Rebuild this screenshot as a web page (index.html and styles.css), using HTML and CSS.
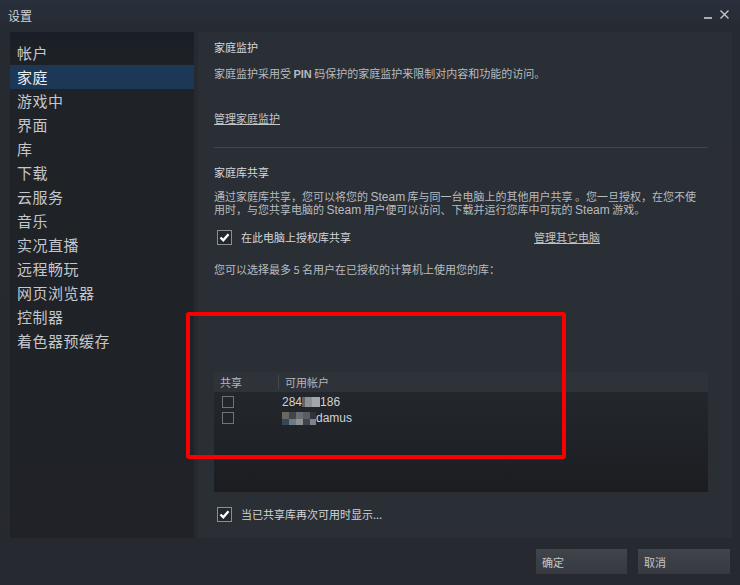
FILE: index.html
```html
<!DOCTYPE html>
<html lang="zh-CN">
<head>
    <meta charset="UTF-8">
    <meta name="viewport" content="width=device-width, initial-scale=1.0">
    <title>设置</title>
    <link rel="stylesheet" href="styles.css">
</head>
<body>
    <div class="window">
        <div class="titlebar">
            <span class="title">设置</span>
            <div class="controls">
                <span class="minimize"></span>
                <svg class="close" width="9" height="9" viewBox="0 0 9 9">
                    <path d="M0.5 0.5 L8.5 8.5 M8.5 0.5 L0.5 8.5" stroke="#c4c7cb" stroke-width="1.4"/>
                </svg>
            </div>
        </div>

        <div class="main">
            <ul class="sidebar">
                <li>帐户</li>
                <li class="active">家庭</li>
                <li>游戏中</li>
                <li>界面</li>
                <li>库</li>
                <li>下载</li>
                <li>云服务</li>
                <li>音乐</li>
                <li>实况直播</li>
                <li>远程畅玩</li>
                <li>网页浏览器</li>
                <li>控制器</li>
                <li>着色器预缓存</li>
            </ul>

            <div class="content">
                <div class="section-title">家庭监护</div>
                <p class="desc">家庭监护采用受 <b>PIN</b> 码保护的家庭监护来限制对内容和功能的访问。</p>
                <a class="link manage-link" href="#">管理家庭监护</a>
                <div class="divider"></div>

                <div class="section-title">家庭库共享</div>
                <p class="desc para">通过家庭库共享，您可以将您的 <span class="latin">Steam</span> 库与同一台电脑上的其他用户共享 。您一旦授权，在您不使<br>用时，与您共享电脑的 <span class="latin">Steam</span> 用户便可以访问、下载并运行您库中可玩的 <span class="latin">Steam</span> 游戏。</p>

                <div class="check-row">
                    <label class="check">
                        <span class="box checked">
                            <svg width="13" height="13" viewBox="0 0 13 13"><path d="M2.5 6.5 L5.3 9.3 L10.5 3.2" stroke="#fff" stroke-width="2.4" fill="none"/></svg>
                        </span>
                        <span class="label">在此电脑上授权库共享</span>
                    </label>
                    <a class="link other-link" href="#">管理其它电脑</a>
                </div>

                <p class="desc limit">您可以选择最多 5 名用户在已授权的计算机上使用您的库：</p>

                <div class="table">
                    <div class="thead">
                        <span class="col-share">共享</span>
                        <span class="col-user">可用帐户</span>
                    </div>
                    <div class="tbody">
                        <div class="row">
                            <span class="box small"></span>
                            <span class="user">284<span class="mosaic m1"><i></i><i></i><i></i></span>186</span>
                        </div>
                        <div class="row">
                            <span class="box small"></span>
                            <span class="user"><span class="mosaic m2"><i></i><i></i><i></i><i></i><i></i></span>damus</span>
                        </div>
                    </div>
                </div>

                <label class="check bottom-check">
                    <span class="box checked">
                        <svg width="13" height="13" viewBox="0 0 13 13"><path d="M2.5 6.5 L5.3 9.3 L10.5 3.2" stroke="#fff" stroke-width="2.4" fill="none"/></svg>
                    </span>
                    <span class="label">当已共享库再次可用时显示...</span>
                </label>

                <div class="highlight"></div>
            </div>
        </div>

        <div class="footer">
            <button class="btn ok">确定</button>
            <button class="btn cancel">取消</button>
        </div>
    </div>
</body>
</html>
```

FILE: styles.css
```css
body {
    margin: 0;
    padding: 0;
    background: #262a30;
    font-family: "Noto Sans CJK SC", "Liberation Sans", sans-serif;
    color: #b9bcc0;
}
.window {
    width: 740px;
    height: 585px;
    background: linear-gradient(to bottom, #29303c 0px, #262a31 30px, #262a30 100%);
    display: flex;
    flex-direction: column;
}

/* title bar */
.titlebar {
    height: 32px;
    display: flex;
    align-items: center;
    justify-content: space-between;
    padding: 0 11px 0 8px;
    box-sizing: border-box;
}
.title {
    font-size: 12px;
    color: #d0d3d7;
    margin-top: -1px;
}
.controls {
    display: flex;
    align-items: flex-end;
    gap: 8px;
    margin-top: -3px;
}
.minimize {
    width: 8px;
    height: 2px;
    background: #a9acb1;
}

/* main area: side menu + page */
.main {
    display: flex;
    gap: 4px;
    padding: 0 8px 0 10px;
    height: 506px;
}
.sidebar {
    list-style: none;
    margin: 0;
    padding: 9px 0 0 0;
    width: 184px;
    background: linear-gradient(to bottom, #1a1e26 0px, #1f2227 40px, #202227 100%);
}
.sidebar li {
    font-size: 15px;
    line-height: 24px;
    height: 24px;
    padding-left: 7px;
    color: #c4c7cb;
    letter-spacing: 0.5px;
}
.sidebar li.active {
    background: #1d3857;
    color: #eef0f2;
}

.content {
    flex: 1;
    position: relative;
    background: #2a2e35;
    padding: 7px 24px 0 16px;
    font-size: 11px;
}
.section-title {
    line-height: 16px;
    color: #d6d8db;
}
.desc {
    margin: 10px 0 0 0;
    line-height: 16px;
    color: #b8bbbf;
}
.desc b {
    font-family: "Liberation Sans", sans-serif;
    font-weight: bold;
    line-height: 10px;
}
.latin {
    font-family: "Liberation Sans", sans-serif;
    font-size: 12px;
    line-height: 10px;
}
.link {
    display: inline-block;
    color: #c3c6ca;
    text-decoration: underline;
    line-height: 16px;
}
.manage-link {
    margin-top: 29px;
}
.divider {
    height: 1px;
    background: #41454c;
    margin: 21px 0 16px 0;
}
.para {
    line-height: 13px;
    height: 24px;
    margin-top: 10px;
}

/* checkbox rows */
.check-row {
    display: flex;
    align-items: center;
    margin-top: 15px;
    padding-left: 3px;
    height: 16px;
}
.check {
    display: flex;
    align-items: center;
    gap: 9px;
    width: 317px;
}
.check .label {
    color: #d3d5d8;
    font-size: 11px;
}
.box {
    width: 13px;
    height: 13px;
    border: 1px solid #8b8e93;
    background: #24272c;
    display: flex;
    align-items: center;
    justify-content: center;
}
.box.small {
    width: 10px;
    height: 10px;
    border-color: #6f7378;
    background: transparent;
}
.other-link {
    color: #c0c3c7;
}
.limit {
    margin-top: 16px;
}

/* account table */
.table {
    margin-top: 95px;
    height: 119px;
    display: flex;
    flex-direction: column;
    background: linear-gradient(to bottom, #25292f 0%, #1b1d21 100%);
    border-bottom: 1px solid #191b1e;
}
.thead {
    height: 20px;
    flex-shrink: 0;
    display: flex;
    align-items: center;
    background: #2e3239;
    color: #b3b6ba;
}
.col-share {
    width: 58px;
    padding-left: 6px;
    border-right: 1px solid #43474e;
    line-height: 14px;
}
.col-user {
    padding-left: 6px;
}
.tbody {
    padding-top: 2px;
}
.row {
    height: 16px;
    display: flex;
    align-items: center;
    padding-left: 8px;
    gap: 48px;
}
.user {
    display: flex;
    align-items: center;
    font-family: "Liberation Sans", sans-serif;
    font-size: 12px;
    color: #d0d3d6;
}
.mosaic {
    display: flex;
    height: 10px;
}
.mosaic i {
    display: block;
    width: 6px;
    height: 10px;
}
.m1 i:nth-child(1) { background: #5f6368; width: 3px; }
.m1 i:nth-child(2) { background: #8d9095; width: 7px; }
.m1 i:nth-child(3) { background: #a3a6aa; width: 8px; }
.m2 {
    height: 13px;
}
.m2 i {
    height: 13px;
    width: 7px;
}
.m2 i:nth-child(1) { background: linear-gradient(#6d665f 50%, #35475a 50%); }
.m2 i:nth-child(2) { background: linear-gradient(#40464d 50%, #6f7a82 50%); }
.m2 i:nth-child(3) { background: linear-gradient(#6a6e72 50%, #8e9194 50%); }
.m2 i:nth-child(4) { background: linear-gradient(#5a5e63 50%, #3e444b 50%); }
.m2 i:nth-child(5) { background: linear-gradient(#2f3338 50%, #7f8387 50%); width: 6px; }

.bottom-check {
    margin-top: 14px;
    padding-left: 3px;
    height: 16px;
}

/* red frame drawn over the page */
.highlight {
    position: absolute;
    left: -12px;
    top: 280px;
    width: 372px;
    height: 139px;
    border: 4px solid #f80000;
    border-radius: 3px;
}

/* dialog buttons */
.footer {
    display: flex;
    justify-content: flex-end;
    gap: 11px;
    padding: 11px 10px 0 0;
}
.btn {
    height: 25px;
    border: none;
    background: linear-gradient(to bottom, #40444b, #363a40);
    color: #c3c6ca;
    font-family: "Noto Sans CJK SC", sans-serif;
    font-size: 11px;
    text-align: left;
    padding: 0 0 0 6px;
}
.ok {
    width: 91px;
}
.cancel {
    width: 92px;
}
```
